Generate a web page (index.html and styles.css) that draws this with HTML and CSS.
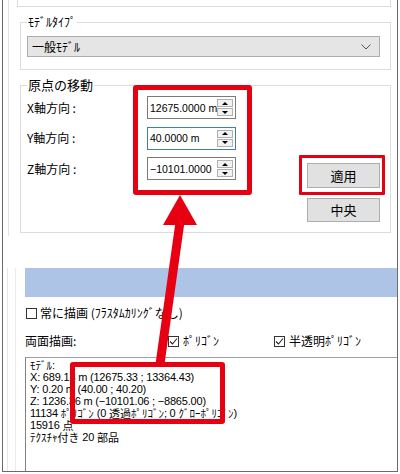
FILE: index.html
```html
<!DOCTYPE html>
<html lang="ja">
<head>
<meta charset="utf-8">
<link rel="stylesheet" href="styles.css">
</head>
<body>
<div class="page">
  <div class="window">
    <div class="upper">
      <div class="prev-box"></div>
      <fieldset class="group g1">
        <legend>ﾓﾃﾞﾙﾀｲﾌﾟ</legend>
        <div class="combo">
          <span>一般ﾓﾃﾞﾙ</span>
          <svg class="chev" width="10" height="6" viewBox="0 0 10 6"><polyline points="0.5,0.5 5,5 9.5,0.5" fill="none" stroke="#555" stroke-width="1"/></svg>
        </div>
      </fieldset>
      <fieldset class="group g2">
        <legend>原点の移動</legend>
        <div class="g2-body">
          <div class="axes">
            <div class="axis-row">
              <span class="axis-label">X軸方向 :</span>
              <div class="spin"><span class="spin-val">12675.0000 m</span><div class="spin-btns"><span class="sb up"></span><span class="sb down"></span></div></div>
            </div>
            <div class="axis-row">
              <span class="axis-label">Y軸方向 :</span>
              <div class="spin focus"><span class="spin-val">40.0000 m</span><div class="spin-btns"><span class="sb up"></span><span class="sb down"></span></div></div>
            </div>
            <div class="axis-row">
              <span class="axis-label">Z軸方向 :</span>
              <div class="spin"><span class="spin-val">−10101.0000</span><div class="spin-btns"><span class="sb up"></span><span class="sb down"></span></div></div>
            </div>
          </div>
          <div class="actions">
            <button class="btn btn-apply">適用</button>
            <button class="btn">中央</button>
          </div>
        </div>
      </fieldset>
    </div>
    <div class="lower">
      <div class="lower-inner">
        <div class="lower-content">
          <div class="bluebar"></div>
          <div class="opt-row r1">
            <span class="cb"></span>
            <span class="cb-text">常に描画 (ﾌﾗｽﾀﾑｶﾘﾝｸﾞなし)</span>
          </div>
          <div class="opt-row r2">
            <span class="both-label">両面描画:</span>
            <span class="opt opt1"><span class="cb"><svg width="9" height="9" viewBox="0 0 9 9"><polyline points="1,4.5 3.5,7 8,1.5" fill="none" stroke="#222" stroke-width="1.1"/></svg></span><span class="cb-text">ﾎﾟﾘｺﾞﾝ</span></span>
            <span class="opt"><span class="cb"><svg width="9" height="9" viewBox="0 0 9 9"><polyline points="1,4.5 3.5,7 8,1.5" fill="none" stroke="#222" stroke-width="1.1"/></svg></span><span class="cb-text">半透明ﾎﾟﾘｺﾞﾝ</span></span>
          </div>
          <div class="info">
            <div class="line"><span class="jp">ﾓﾃﾞﾙ</span>:</div>
            <div class="line">X: 689.13 m (12675.33 ; 13364.43)</div>
            <div class="line">Y: 0.20 m (40.00 ; 40.20)</div>
            <div class="line">Z: 1236.36 m (−10101.06 ; −8865.00)</div>
            <div class="line">11134 <span class="jp">ﾎﾟﾘｺﾞﾝ</span> (0 <span class="jp">透過ﾎﾟﾘｺﾞﾝ</span>; 0 <span class="jp">ｸﾞﾛｰﾎﾟﾘｺﾞﾝ</span>)</div>
            <div class="line">15916 <span class="jp">点</span></div>
            <div class="line"><span class="jp">ﾃｸｽﾁｬ付き</span> 20 <span class="jp">部品</span></div>
          </div>
        </div>
      </div>
    </div>
  </div>

  <div class="mark mark-inputs"></div>
  <div class="mark mark-apply"></div>
  <div class="mark mark-info"></div>
  <svg class="arrow" width="400" height="474" viewBox="0 0 400 474">
    <polygon points="180,195 163,225 197,225" fill="#e60012"/>
    <polygon points="175.5,222 184.5,222 164.5,364 155.5,364" fill="#e60012"/>
  </svg>
</div>
</body>
</html>
```

FILE: styles.css
```css
* { box-sizing: border-box; }
html, body { margin: 0; padding: 0; background: #fff; }
body {
  font-family: "Noto Sans CJK JP", sans-serif;
  font-size: 12px;
  color: #000;
}
.page {
  position: relative;
  width: 400px;
  height: 474px;
  overflow: hidden;
}
.window {
  margin-left: 2px;
  width: 396px;
  height: 472px;
  border: solid #6a6a6a;
  border-width: 0 1px 1px 1px;
  display: flex;
  flex-direction: column;
}
.upper {
  margin-left: 5px;
  border-left: 1px solid #e3e3e3;
  padding-bottom: 3px;
}
.prev-box {
  margin-left: 8px;
  width: 374px;
  height: 7px;
  border: 1px solid #dcdcdc;
  border-top: none;
}
.group {
  margin: 0 0 0 11px;
  width: 371px;
  min-width: 0;
  border: 1px solid #dcdcdc;
  padding: 7px 10px 12px 6px;
}
.group legend {
  padding: 0 1px;
  line-height: 14px;
  font-size: 12px;
}
.g1 { margin-top: 8px; }
.combo {
  height: 21px;
  border: 1px solid #adadad;
  background: #e5e5e5;
  display: flex;
  align-items: center;
  padding: 0 8px 0 4px;
  line-height: 14px;
}
.combo span { flex: 1; }
.chev { display: block; }
.g2 {
  margin-top: 7px;
  padding: 3px 10px 10px 6px;
}
.g2 legend {
  font-size: 13px;
  line-height: 16px;
}
.g2-body {
  display: flex;
  align-items: flex-start;
}
.axes {
  display: flex;
  flex-direction: column;
  gap: 7.5px;
}
.axis-row {
  display: flex;
  align-items: center;
  height: 23px;
}
.axis-label {
  width: 120px;
  line-height: 14px;
}
.spin {
  width: 89px;
  height: 23px;
  border: 1px solid #7a7a7a;
  display: flex;
  align-items: center;
  padding-left: 2px;
  background: #fff;
}
.spin.focus { border-color: #3d7dbd; }
.spin-val {
  flex: 1;
  overflow: hidden;
  white-space: nowrap;
  font-family: "Liberation Sans", sans-serif;
  font-size: 10.5px;
  line-height: 14px;
}
.spin-btns {
  width: 16px;
  margin-right: 2px;
  display: flex;
  flex-direction: column;
  gap: 1px;
}
.sb {
  height: 8px;
  border: 1px solid #b0b0b0;
  background: #f2f2f2;
  display: flex;
  align-items: center;
  justify-content: center;
}
.sb::after {
  content: "";
  border-left: 3px solid transparent;
  border-right: 3px solid transparent;
}
.sb.up::after { border-bottom: 3px solid #000; }
.sb.down::after { border-top: 3px solid #000; }
.actions {
  margin-left: auto;
  padding-top: 67px;
  display: flex;
  flex-direction: column;
  gap: 10px;
}
.btn {
  width: 73px;
  height: 24px;
  margin: 0;
  padding: 0;
  border: 1px solid #adadad;
  background: #e1e1e1;
  font-family: "Noto Sans CJK JP", sans-serif;
  font-size: 13px;
  line-height: 16px;
  color: #000;
}
.btn-apply { height: 25px; }
.lower {
  margin-top: 32px;
  flex: 1;
  margin-left: 4px;
  border-left: 1px solid #e6e6e6;
  display: flex;
}
.lower-inner {
  flex: 1;
  margin-left: 7px;
  border-left: 1px solid #ececec;
  display: flex;
}
.lower-content {
  flex: 1;
  margin-left: 9px;
  display: flex;
  flex-direction: column;
}
.bluebar {
  height: 29px;
  background: #adc4e7;
}
.opt-row {
  display: flex;
  align-items: center;
  line-height: 14px;
}
.r1 { margin-top: 5px; height: 22px; }
.r2 { margin-top: 5px; height: 24px; }
.cb {
  width: 11px;
  height: 11px;
  border: 1px solid #333;
  background: #fff;
  display: flex;
  align-items: center;
  justify-content: center;
  flex: none;
}
.r1 .cb { margin-left: 1px; margin-right: 3px; }
.both-label { width: 143px; }
.opt { display: flex; align-items: center; }
.opt1 { width: 106px; }
.opt .cb-text { margin-left: 4px; }
.info {
  margin-top: 4px;
  flex: 1;
  border-top: 1px solid #a0a0a0;
  border-left: 1px solid #828282;
  padding: 1px 0 0 4px;
  font-family: "Liberation Sans", "Noto Sans CJK JP", sans-serif;
  font-size: 11px;
  letter-spacing: -0.2px;
  white-space: nowrap;
}
.info .line {
  height: 12px;
  line-height: 12px;
  display: flex;
  align-items: center;
  white-space: pre;
}
.info .jp {
  font-family: "Noto Sans CJK JP", sans-serif;
  font-size: 11px;
  line-height: 12px;
  letter-spacing: 0;
}
.mark {
  position: absolute;
  border: 5px solid #e60012;
  border-radius: 3px;
}
.mark-inputs { left: 133px; top: 85px; width: 119px; height: 110px; }
.mark-apply { left: 299px; top: 155px; width: 86px; height: 40px; border-width: 3px; border-radius: 1px; }
.mark-info { left: 70px; top: 362px; width: 155px; height: 62px; }
.arrow {
  position: absolute;
  left: 0;
  top: 0;
  pointer-events: none;
}
```
